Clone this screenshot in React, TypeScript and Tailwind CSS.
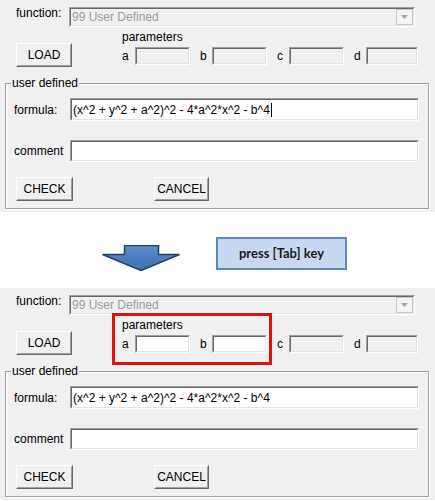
const FONT = "font-['Liberation_Sans',Arial,sans-serif]";

interface EditProps {
  w: string;
  h: string;
  disabled?: boolean;
  value?: string;
  caret?: boolean;
}

function Edit({ w, h, disabled, value, caret }: EditProps) {
  return (
    <div className={`${w} ${h} border border-t-[#a0a0a0] border-l-[#a0a0a0] border-b-white border-r-white`}>
      <div
        className={`h-full border border-t-[#696969] border-l-[#696969] border-b-[#e3e3e3] border-r-[#e3e3e3] flex items-center pl-[1px] text-[12px] text-black whitespace-pre ${
          disabled ? 'bg-[#f0f0f0]' : 'bg-white'
        }`}
      >
        {value}
        {caret && <span className="inline-block w-px h-[14px] bg-black ml-px" />}
      </div>
    </div>
  );
}

function WinButton({ label, w }: { label: string; w: string }) {
  return (
    <div className={`${w} h-[24px] border border-t-white border-l-white border-b-[#696969] border-r-[#696969]`}>
      <div className="h-full border border-t-[#f0f0f0] border-l-[#f0f0f0] border-b-[#a0a0a0] border-r-[#a0a0a0] bg-[#f0f0f0] flex items-center justify-center text-[12px] text-black">
        {label}
      </div>
    </div>
  );
}

function Panel({ tabbed }: { tabbed?: boolean }) {
  return (
    <div className={`relative h-[212px] bg-[#f0f0f0] ${FONT} text-[12px] leading-[14px] text-black`}>
      {/* function select */}
      <div className="flex items-start pt-[6px] pl-[16px]">
        <span className="w-[53px]">function:</span>
        <div className="mt-[1px] w-[346px] h-[20px] border border-t-[#a0a0a0] border-l-[#a0a0a0] border-b-white border-r-white">
          <div className="h-full border border-t-[#696969] border-l-[#696969] border-b-[#e3e3e3] border-r-[#e3e3e3] bg-[#f0f0f0] flex items-center justify-between">
            <span className="pl-[1px] text-[#9d9d9d]">99 User Defined</span>
            <div className="w-[17px] h-full border border-[#c8c8c8] bg-[#f4f4f4] flex items-center justify-center">
              <svg width="7" height="4" viewBox="0 0 7 4">
                <path d="M0 0h7L3.5 4z" fill="#a8a8a8" />
              </svg>
            </div>
          </div>
        </div>
      </div>

      {/* load + parameters */}
      <div className="flex items-start pl-[16px] mt-[2px]">
        <div className="mt-[14px]">
          <WinButton label="LOAD" w="w-[56px]" />
        </div>
        <div className="ml-[50px] flex flex-col">
          <span className="pt-px">parameters</span>
          <div className="flex items-center mt-[3px]">
            <span className="w-[13px]">a</span>
            <Edit w="w-[55px]" h="h-[18px]" disabled={!tabbed} />
            <span className="w-[12px] ml-[10px]">b</span>
            <Edit w="w-[55px]" h="h-[18px]" disabled={!tabbed} />
            <span className="w-[12px] ml-[10px]">c</span>
            <Edit w="w-[55px]" h="h-[18px]" disabled />
            <span className="w-[12px] ml-[10px]">d</span>
            <Edit w="w-[52px]" h="h-[18px]" disabled />
          </div>
        </div>
      </div>

      {/* user defined group */}
      <fieldset className="mt-[9px] ml-[5px] mr-[6px] h-[133px] border border-[#a0a0a0] shadow-[inset_1px_1px_0_#ffffff,1px_1px_0_#ffffff]">
        <legend className="ml-[5px] px-px">user defined</legend>
        <div className="flex items-center pl-[8px] mt-[8px]">
          <span className="w-[56px]">formula:</span>
          <Edit
            w="w-[349px]"
            h="h-[23px]"
            value="(x^2 + y^2 + a^2)^2 - 4*a^2*x^2 - b^4"
            caret={!tabbed}
          />
        </div>
        <div className="flex items-center pl-[8px] mt-[19px]">
          <span className="w-[56px]">comment</span>
          <Edit w="w-[349px]" h="h-[22px]" />
        </div>
        <div className="flex pl-[10px] mt-[15px]">
          <WinButton label="CHECK" w="w-[57px]" />
          <div className="ml-[81px]">
            <WinButton label="CANCEL" w="w-[55px]" />
          </div>
        </div>
      </fieldset>

      {tabbed && (
        <div className="absolute left-[112px] top-[25px] w-[160px] h-[52px] border-[3px] border-[#e01010]" />
      )}
    </div>
  );
}

export default function App() {
  return (
    <div className="w-[435px] h-[501px] bg-white overflow-hidden">
      <Panel />
      <div className="h-[76px] flex items-start pl-[102px]">
        <svg className="mt-[33px]" width="78" height="26" viewBox="0 0 78 26">
          <defs>
            <linearGradient id="arrowFill" x1="0" y1="0" x2="0" y2="1">
              <stop offset="0" stopColor="#5b8fd0" />
              <stop offset="1" stopColor="#3f6fae" />
            </linearGradient>
          </defs>
          <path
            d="M22.5 0.5h34v9h21L39 25.5 0.5 9.5h22z"
            fill="url(#arrowFill)"
            stroke="#243f63"
            strokeWidth="1.5"
            strokeLinejoin="miter"
          />
        </svg>
        <div className="ml-[36px] mt-[25px] w-[131px] h-[33px] bg-[#c6d9f1] border-2 border-[#5a89c6] flex items-center justify-center font-['Lato',sans-serif] font-bold text-[13px] text-[#1a1a1a]">
          press [Tab] key
        </div>
      </div>
      <Panel tabbed />
    </div>
  );
}
